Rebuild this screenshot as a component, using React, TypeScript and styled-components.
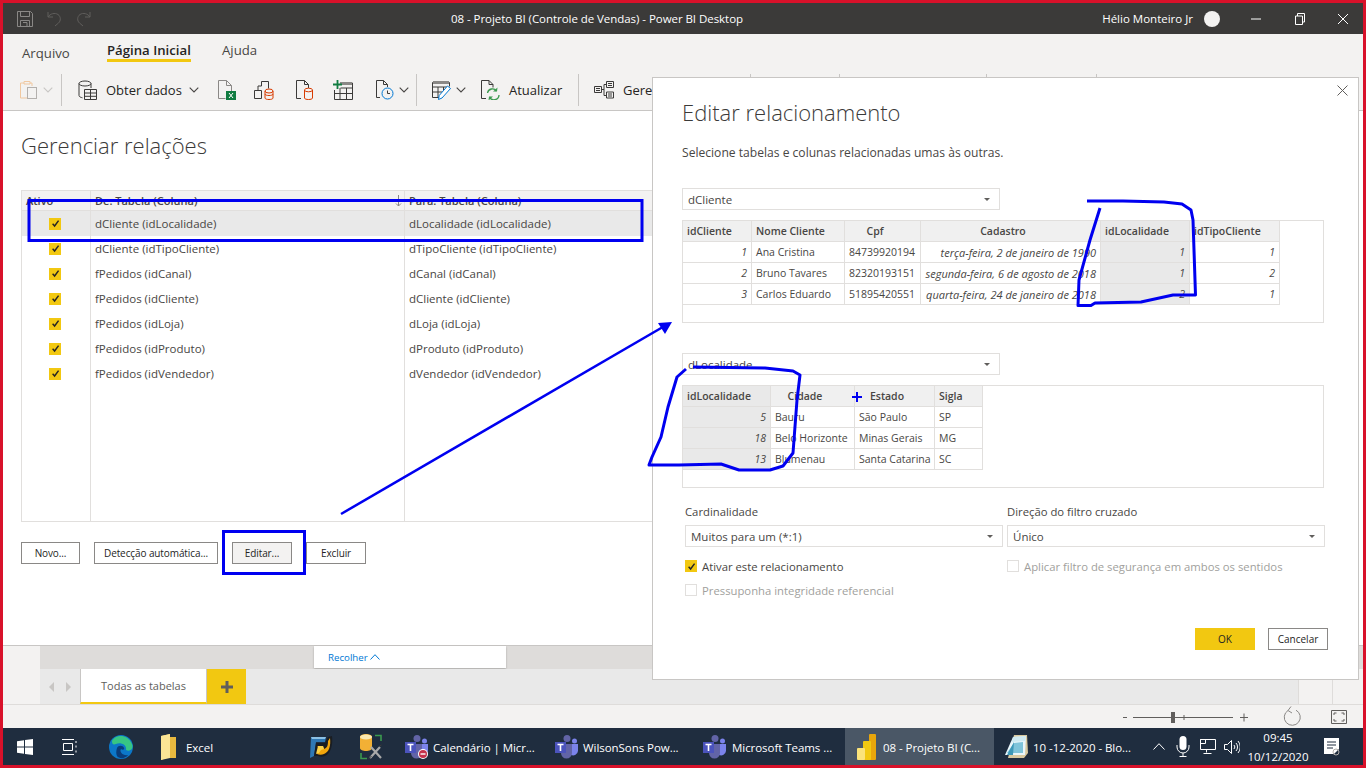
import React from 'react';
import styled, { createGlobalStyle } from 'styled-components';

const FONT = `"Open Sans", "Noto Sans", "Liberation Sans", sans-serif`;
const RED = '#d8112a';
const YELLOW = '#f2c811';
const LINE = '#e1dfdd';

const GlobalStyle = createGlobalStyle`
  html, body { margin: 0; padding: 0; background: #fff; overflow: hidden; }
  * { box-sizing: border-box; }
  body { font-family: ${FONT}; color: #252423; }
`;

const Frame = styled.div`
  position: relative;
  width: 1366px;
  height: 768px;
  border: 3px solid ${RED};
  display: flex;
  flex-direction: column;
  overflow: hidden;
  background: #fff;
`;

/* title bar */
const TitleBar = styled.header`
  height: 31px;
  flex: none;
  background: #3b3a39;
  color: #fff;
  display: grid;
  grid-template-columns: 448px 1fr auto;
  align-items: center;
  font-size: 11.5px;
`;
const QuickAccess = styled.div`
  display: flex;
  align-items: center;
  padding-left: 14px;
  gap: 14px;
`;
const WindowTitle = styled.div`
  white-space: nowrap;
  letter-spacing: -0.05px;
`;
const UserArea = styled.div`
  display: flex;
  align-items: center;
  height: 100%;
`;
const UserName = styled.span`
  margin-right: 11px;
  white-space: nowrap;
`;
const Avatar = styled.span`
  width: 16px;
  height: 16px;
  border-radius: 50%;
  background: #f3f2f1;
  margin-right: 13px;
`;
const WindowButton = styled.span<{ $w: number }>`
  width: ${p => p.$w}px;
  height: 100%;
  display: flex;
  align-items: center;
  justify-content: center;
`;

/* tabs */
const TabBar = styled.nav`
  height: 37px;
  flex: none;
  background: #f3f2f1;
  display: flex;
  padding-left: 19px;
  font-size: 13.2px;
`;
const RibbonTab = styled.span<{ $active?: boolean; $w: number; $drop?: number }>`
  width: ${p => p.$w}px;
  height: 31px;
  display: flex;
  align-items: center;
  white-space: nowrap;
  position: relative;
  font-weight: ${p => (p.$active ? 600 : 400)};
  color: ${p => (p.$active ? '#252423' : '#484644')};
  padding-top: ${p => p.$drop ?? 1}px;
  ${p => p.$active && `
    &:after {
      content: '';
      position: absolute;
      left: 0;
      bottom: 3px;
      width: 84px;
      height: 3px;
      background: ${YELLOW};
    }
  `}
`;

/* ribbon */
const Ribbon = styled.div`
  height: 40px;
  flex: none;
  background: #f3f2f1;
  border-bottom: 1px solid #c8c6c4;
  display: flex;
  align-items: flex-start;
  font-size: 13px;
`;
const RibbonSep = styled.span`
  width: 1px;
  height: 32px;
  margin-top: 3px;
  background: #c8c6c4;
  flex: none;
`;
const RibbonSlot = styled.div<{ $w: number; $pad?: number; $center?: boolean }>`
  width: ${p => p.$w}px;
  height: 38px;
  flex: none;
  display: flex;
  align-items: center;
  gap: 5px;
  padding-left: ${p => p.$pad ?? 0}px;
  justify-content: ${p => (p.$center ? 'center' : 'flex-start')};
  white-space: nowrap;
  overflow: hidden;
`;
const RibbonLabel = styled.span<{ $gap: number }>`
  margin-left: ${p => p.$gap}px;
  margin-right: 2px;
  color: #252423;
`;

/* main page */
const Page = styled.main`
  flex: 1;
  min-height: 0;
  background: #fff;
  padding: 18px 0 0 18px;
  border-bottom: 1px solid #c8c6c4;
`;
const PageTitle = styled.h1`
  margin: 0;
  height: 32px;
  line-height: 32px;
  font-size: 22px;
  font-weight: 300;
  color: #3b3a39;
`;
const RelTable = styled.div`
  margin-top: 29px;
  width: 1320px;
  height: 332px;
  border-top: 1px solid ${LINE};
  border-bottom: 1px solid ${LINE};
  border-left: 1px solid ${LINE};
  position: relative;
  font-size: 11.5px;
  color: #484644;
  display: grid;
  grid-template-columns: 69px 314px 1fr;
  grid-template-rows: 20px repeat(7, 25px) 1fr;
`;
const HeadCell = styled.div`
  background: #f3f2f1;
  font-weight: 600;
  color: #484644;
  font-size: 11px;
  padding-left: 4px;
  display: flex;
  align-items: center;
  border-bottom: 1px solid ${LINE};
  border-right: 1px solid ${LINE};
  white-space: nowrap;
  position: relative;
`;
const SortArrow = styled.span`
  position: absolute;
  right: 2px;
  top: 4px;
  display: flex;
`;
const RowCell = styled.div<{ $sel?: boolean; $check?: boolean }>`
  background: ${p => (p.$sel ? '#e9e9e9' : '#fff')};
  border-right: 1px solid ${LINE};
  display: flex;
  align-items: center;
  justify-content: ${p => (p.$check ? 'center' : 'flex-start')};
  padding: ${p => (p.$check ? '0 2px 0 0' : '0 0 0 4px')};
  white-space: nowrap;
`;
const FillCell = styled.div`
  border-right: 1px solid ${LINE};
`;
const CheckBox = styled.span<{ $on?: boolean }>`
  width: 12px;
  height: 12px;
  flex: none;
  display: inline-flex;
  align-items: center;
  justify-content: center;
  background: ${p => (p.$on ? YELLOW : '#fff')};
  border: ${p => (p.$on ? 'none' : `1px solid ${LINE}`)};
`;
const PageActions = styled.div`
  display: flex;
  margin-top: 20px;
  gap: 14px;
`;
const ActionButton = styled.button<{ $w: number; $hover?: boolean }>`
  width: ${p => p.$w}px;
  height: 22px;
  font: 400 10px ${FONT};
  letter-spacing: -0.1px;
  color: #252423;
  background: ${p => (p.$hover ? '#f3f2f1' : '#fff')};
  border: 1px solid #8a8886;
  padding: 0;
  white-space: nowrap;
`;

/* bottom strips */
const Collapser = styled.div`
  height: 23px;
  flex: none;
  display: flex;
  background: #f3f2f1;
`;
const CollapserTrack = styled.div`
  margin-left: 37px;
  flex: 1;
  background: #dedcda;
  padding-left: 274px;
`;
const CollapsePanel = styled.div`
  width: 192px;
  height: 22px;
  background: #fff;
  box-shadow: 0 1px 2px rgba(0, 0, 0, 0.25);
  color: #0078d4;
  font-size: 9.7px;
  display: flex;
  align-items: center;
  gap: 2px;
  padding-left: 14px;
`;
const SheetBar = styled.div`
  height: 36px;
  flex: none;
  display: flex;
  background: #f3f2f1;
  border-bottom: 1px solid #dedcda;
`;
const SheetTrack = styled.div`
  margin-left: 37px;
  flex: 1;
  display: flex;
  background: #e9e9e9;
`;
const SheetNav = styled.div`
  width: 40px;
  display: flex;
  align-items: center;
  justify-content: space-around;
  padding: 0 3px;
`;
const SheetTab = styled.div`
  width: 127px;
  height: 35px;
  background: #fff;
  border-bottom: 2px solid ${YELLOW};
  border-left: 1px solid #c8c6c4;
  border-right: 1px solid #c8c6c4;
  font-size: 11px;
  color: #605e5c;
  display: flex;
  align-items: center;
  justify-content: center;
`;
const AddSheet = styled.div`
  width: 39px;
  height: 35px;
  background: ${YELLOW};
  display: flex;
  align-items: center;
  justify-content: center;
`;
const SheetEnd = styled.div`
  margin-left: auto;
  width: 65px;
  height: 100%;
  background: #f3f2f1;
  display: flex;
`;
const SheetEndCell = styled.div`
  width: 35px;
  border-left: 1px solid #dedcda;
  border-right: 1px solid #dedcda;
`;
const StatusBar = styled.div`
  height: 23px;
  flex: none;
  background: #f3f2f1;
  display: flex;
  align-items: center;
  justify-content: flex-end;
  padding-right: 16px;
`;
const StatusGap = styled.span<{ $w: number }>`
  width: ${p => p.$w}px;
  flex: none;
`;

/* taskbar */
const Taskbar = styled.footer`
  height: 37px;
  flex: none;
  background: #1f2d3f;
  color: #fff;
  display: flex;
  font-size: 11.5px;
`;
const TaskItem = styled.div<{ $w: number; $pad?: number; $active?: boolean }>`
  width: ${p => p.$w}px;
  height: 100%;
  flex: none;
  display: flex;
  align-items: center;
  justify-content: ${p => (p.$pad === undefined ? 'center' : 'flex-start')};
  padding-left: ${p => p.$pad ?? 0}px;
  background: ${p => (p.$active ? '#4a5766' : 'transparent')};
  white-space: nowrap;
`;
const TaskLabel = styled.span<{ $gap: number }>`
  margin-left: ${p => p.$gap}px;
  padding-top: 2px;
  letter-spacing: -0.05px;
`;
const Clock = styled.div`
  width: 76px;
  height: 100%;
  flex: none;
  display: flex;
  flex-direction: column;
  align-items: center;
  justify-content: center;
  font-size: 11.5px;
  line-height: 19px;
`;

/* dialog */
const Dialog = styled.section`
  position: absolute;
  left: 649px;
  top: 74px;
  width: 707px;
  height: 603px;
  background: #fff;
  border: 1px solid #c8c6c4;
  padding: 18px 30px 0 29px;
  color: #252423;
`;
const DialogClose = styled.span`
  position: absolute;
  right: 10px;
  top: 7px;
  display: flex;
`;
const DialogTitle = styled.h2`
  margin: 0;
  height: 32px;
  line-height: 32px;
  font-size: 22px;
  font-weight: 300;
  color: #3b3a39;
`;
const DialogHint = styled.p`
  margin: 16px 0 0;
  height: 18px;
  line-height: 18px;
  font-size: 12.1px;
  color: #484644;
`;
const Select = styled.div<{ $w: number; $mt: number }>`
  width: ${p => p.$w}px;
  height: 22px;
  margin-top: ${p => p.$mt}px;
  border: 1px solid ${LINE};
  background: #fff;
  display: flex;
  align-items: center;
  justify-content: space-between;
  padding: 0 9px 0 5px;
  font-size: 11.5px;
  color: #484644;
`;
const Caret = styled.span`
  width: 0;
  height: 0;
  border-left: 3px solid transparent;
  border-right: 3px solid transparent;
  border-top: 3px solid #605e5c;
`;
const PreviewBox = styled.div`
  width: 642px;
  height: 103px;
  margin-top: 10px;
  border: 1px solid ${LINE};
`;
const Preview = styled.table<{ $w: number }>`
  width: ${p => p.$w}px;
  table-layout: fixed;
  border-collapse: collapse;
  font-size: 10.5px;
  color: #484644;
  margin: -1px 0 0 -1px;
`;
const PreviewHead = styled.th<{ $center?: boolean; $key?: boolean }>`
  height: 21px;
  padding: ${p => (p.$center ? '0 19px 0 4px' : '0 4px')};
  font-weight: 600;
  font-size: 10.5px;
  background: ${p => (p.$key ? '#e9e9e9' : '#f0f0f0')};
  border: 1px solid ${LINE};
  text-align: ${p => (p.$center ? 'center' : 'left')};
  white-space: nowrap;
  overflow: hidden;
`;
const PreviewCell = styled.td<{ $num?: boolean; $key?: boolean; $date?: boolean }>`
  height: 21px;
  padding: 0 4px;
  border: 1px solid ${LINE};
  background: ${p => (p.$key ? '#e9e9e9' : '#fff')};
  font-style: ${p => (p.$num || p.$date ? 'italic' : 'normal')};
  font-size: ${p => (p.$date ? 11 : 10.5)}px;
  text-align: ${p => (p.$num || p.$date ? 'right' : 'left')};
  white-space: nowrap;
  overflow: hidden;
`;
const FormGrid = styled.div`
  display: grid;
  grid-template-columns: 318px 318px;
  column-gap: 4px;
  margin: 16px 0 0 3px;
`;
const FieldLabel = styled.label`
  display: block;
  height: 16px;
  line-height: 16px;
  font-size: 11.3px;
  color: #484644;
`;
const CheckRow = styled.div<{ $mt: number; $off?: boolean }>`
  display: flex;
  align-items: center;
  gap: 5px;
  height: 14px;
  margin-top: ${p => p.$mt}px;
  font-size: 11.3px;
  white-space: nowrap;
  color: ${p => (p.$off ? '#a19f9d' : '#484644')};
`;
const DialogFooter = styled.div`
  display: flex;
  justify-content: flex-end;
  gap: 13px;
  margin-top: 31px;
`;
const DialogButton = styled.button<{ $primary?: boolean }>`
  height: 22px;
  width: 60px;
  padding: 0;
  font: 400 10px ${FONT};
  color: #252423;
  background: ${p => (p.$primary ? YELLOW : '#fff')};
  border: ${p => (p.$primary ? 'none' : '1px solid #8a8886')};
`;

/* hand drawn marks that lie over the screen */
const Markup = styled.svg`
  position: absolute;
  left: -3px;
  top: -3px;
  width: 1366px;
  height: 768px;
  pointer-events: none;
`;

/* icons */
const Svg = styled.svg`
  display: block;
  flex: none;
`;
const Chevron = ({ color = '#484644', w = 10 }: { color?: string; w?: number }) => (
  <Svg width={w} height="6" viewBox="0 0 10 6" fill="none" stroke={color} strokeWidth="1.1">
    <path d="M.7.7 5 5 9.3.7" />
  </Svg>
);
const Tick = () => (
  <Svg width="9" height="9" viewBox="0 0 10 10" fill="none" stroke="#252423" strokeWidth="1.6">
    <path d="M1.8 5.4 4 7.8 8.4 1.8" />
  </Svg>
);
const IconSave = () => (
  <Svg width="16" height="16" viewBox="0 0 16 16" fill="none" stroke="#8a8886">
    <path d="M.5.5h13l2 2v13H.5zM3.500.5v5h9v-5M3.500 15.500v-6h9v6M6 11.500h4v4" />
  </Svg>
);
const IconUndo = ({ flip }: { flip?: boolean }) => (
  <Svg width="15" height="16" viewBox="0 0 15 16" fill="none" stroke="#605e5c" style={flip ? { transform: 'scaleX(-1)' } : undefined}>
    <path d="M1 1v5h5M1.200 6C3 2.500 8 1.500 11 3.500c3 2 3 6.500.5 8.500L8 15" />
  </Svg>
);
const IconClipboard = () => (
  <Svg width="18" height="20" viewBox="0 0 18 20" fill="none">
    <path d="M4 3H.5v15H7M10 3h2v3M4 1.500h6V4H4z" stroke="#f0c8a0" />
    <rect x="7.500" y="7.500" width="9" height="11" stroke="#b3b0ad" />
  </Svg>
);
const IconGetData = () => (
  <Svg width="19" height="20" viewBox="0 0 19 20" fill="none" stroke="#3b3a39">
    <path d="M1 3.500v12c0 1.300 2 2 3.500 2.300M13 3.500V8" />
    <ellipse cx="7" cy="3.500" rx="6" ry="2.500" />
    <path d="M6.500 9.500h12v10h-12zM6.500 13h12M6.500 16.300h12M12.500 9.500v10" />
  </Svg>
);
const IconExcel = () => (
  <Svg width="18" height="20" viewBox="0 0 18 20" fill="none">
    <path d="M.5.500h8l5 5V13M.5.500v18h7" stroke="#8a8886" />
    <path d="M8.500.500v5h5" stroke="#8a8886" />
    <rect x="8" y="11" width="10" height="9" fill="#107c41" />
    <path d="m11 13 4 5m0-5-4 5" stroke="#fff" />
  </Svg>
);
const IconHub = () => (
  <Svg width="20" height="20" viewBox="0 0 20 20" fill="none">
    <path d="M7.500 6V1.500h7v7M.5 10.500h7v8h-7zM7.500 6H4v4.500" stroke="#3b3a39" />
    <ellipse cx="15" cy="11" rx="4" ry="2" stroke="#d83b01" />
    <path d="M11 11v7c0 1 2 1.500 4 1.500s4-.5 4-1.500v-7M11 14c0 1 2 1.500 4 1.500s4-.5 4-1.500" stroke="#d83b01" />
  </Svg>
);
const IconDbFile = () => (
  <Svg width="18" height="20" viewBox="0 0 18 20" fill="none">
    <path d="M5 18.500H.5V.5h8l4 4V8M8.500.5v4h4" stroke="#3b3a39" />
    <ellipse cx="12.500" cy="10" rx="4" ry="1.800" stroke="#d83b01" />
    <path d="M8.500 10v8c0 1 2 1.500 4 1.500s4-.5 4-1.500v-8" stroke="#d83b01" />
  </Svg>
);
const IconNewTable = () => (
  <Svg width="20" height="20" viewBox="0 0 20 20" fill="none">
    <path d="M7 3h12.500v16.500H1.500V10" stroke="#3b3a39" />
    <path d="M7.500 8h12M1.500 13.500h18M7 8v11.500M13.500 8v11.500" stroke="#3b3a39" />
    <path d="M7 2h12v3H7z" fill="#8a8886" />
    <path d="M4.500 0v9M0 4.500h9" stroke="#107c41" strokeWidth="1.800" />
  </Svg>
);
const IconSchedule = () => (
  <Svg width="18" height="20" viewBox="0 0 18 20" fill="none">
    <path d="M4 17.500H.5V.5h7l4 4V7M7.500.5v4h4" stroke="#3b3a39" />
    <circle cx="11.500" cy="13.500" r="5.500" stroke="#0078d4" />
    <path d="M11.500 10.500v3h2.500" stroke="#3b3a39" />
  </Svg>
);
const IconEditTable = () => (
  <Svg width="19" height="20" viewBox="0 0 19 20" fill="none">
    <path d="M.5 2.500h17v4M.5 2.500v15h9M.5 7h15M.5 12h11M6 7v10.500M11.500 7v5" stroke="#3b3a39" />
    <path d="M1 1h16v3H1z" fill="#8a8886" />
    <path d="m6.500 19.500.7-4L15.500 6l3 2.500-8.500 9.500z" fill="#fff" stroke="#0078d4" />
  </Svg>
);
const IconRefresh = () => (
  <Svg width="19" height="20" viewBox="0 0 19 20" fill="none">
    <path d="M5 18.500H.5V.5h7.500l4 4v3M8 .5v4h4" stroke="#3b3a39" />
    <path d="M6.500 13a5 5 0 0 1 9-2M18 15a5 5 0 0 1-9.500 2" stroke="#3b9a4f" strokeWidth="1.300" />
    <path d="m16.500 7.500-.5 4h-4zM7.500 20.500l.5-4h4z" fill="#3b9a4f" />
  </Svg>
);
const IconManage = () => (
  <Svg width="20" height="18" viewBox="0 0 20 18" fill="none" stroke="#3b3a39">
    <path d="M.5 5.500h7v6h-7zM12.500.5h7v6h-7zM12.500 11h7v6h-7zM7.500 8.500h2.500M10 3.500v11M10 3.500h2.500M10 14.500h2.500M2 7.500h4M2 9.500h4M14 2.500h4M14 4.500h4M14 13h4M14 15h4" />
  </Svg>
);
const IconWindows = () => (
  <Svg width="16" height="16" viewBox="0 0 16 16" fill="#fff">
    <path d="M0 2.200 7 1.200v6.300H0zM8 1l8-1v7.500H8zM0 8.500h7v6.300l-7-1zM8 8.500h8V16l-8-1z" />
  </Svg>
);
const IconTaskView = () => (
  <Svg width="16" height="16" viewBox="0 0 16 16" fill="none" stroke="#fff">
    <path d="M0 .5h12M0 15.500h12M1.500 4.500h9v7h-9zM14 2v2M14 6.500v2M14 11.500v2" />
  </Svg>
);
const IconEdge = () => (
  <Svg width="24" height="24" viewBox="0 0 24 24">
    <circle cx="12" cy="12" r="12" fill="#0c77c9" />
    <path d="M3 6c3-6 15-8 20 3 2 5-2 8-6 6 1-5-5-8-10-6-3 1-4 0-4-3z" fill="#37c584" />
    <path d="M8 13c1-3 6-3 7 0 1 2-2 2-3 1-2 3 2 7 7 6-3 4-9 4-11 1-1-2-1-5 0-8z" fill="#0a3c7a" />
  </Svg>
);
const IconFolder = () => (
  <Svg width="16" height="26" viewBox="0 0 16 26">
    <path d="M1 2 10 0v3h6v21H6l-5 2z" fill="#f7d774" />
    <path d="M10 3h6v21h-6z" fill="#e8b93f" />
    <path d="M1 2l9-2v24l-9 2z" fill="#fbe595" />
  </Svg>
);
const IconPbiOld = () => (
  <Svg width="25" height="24" viewBox="0 0 25 24">
    <path d="M2 2h15l-1 5H7L5 21l-4 2z" fill="#2f78b4" />
    <path d="M2 2h15l-1 2H3z" fill="#8cc0e4" />
    <path d="M5 21 7 8h9l3-6 4-1c1 9-1 17-7 20-2 1-5 1-7 0z" fill="#1a1d22" />
    <path d="M8 11h6l1 3c3-1 4-3 4-8l2-3c1 8-1 14-6 16-2 1-5 1-7 0l1-3 2-3z" fill="#f2a60c" />
    <path d="M9 11h5l1 3-3 1-2 3-3 1z" fill="#fbd24a" />
  </Svg>
);
const IconTools = () => (
  <Svg width="24" height="26" viewBox="0 0 24 26" fill="none">
    <path d="M1 3c0-4 12-4 12 0v11c0 4-12 4-12 0z" fill="#f2b035" />
    <ellipse cx="7" cy="3" rx="6" ry="2.500" fill="#fbe8b0" />
    <path d="M16 1.500h6V7M2 19v5.500h6" stroke="#3b9a4f" strokeWidth="1.600" />
    <path d="m11 24 10-11m-9 0 10 11" stroke="#a8a8a8" strokeWidth="2.200" />
    <path d="m9.500 25 3-3m8-10 2-1" stroke="#3b3a39" strokeWidth="1" />
  </Svg>
);
const IconTeams = ({ busy }: { busy?: boolean }) => (
  <Svg width="24" height="26" viewBox="0 0 24 26">
    <circle cx="12" cy="4.500" r="3.500" fill="#6264a7" />
    <circle cx="19.500" cy="7" r="2.500" fill="#7b83eb" />
    <path d="M15 10h8v7a5 5 0 0 1-7 4z" fill="#7b83eb" />
    <path d="M6 10h11v9a5.500 5.500 0 0 1-11 0z" fill="#6264a7" />
    <rect x="0" y="8" width="11" height="11" fill="#4b53bc" />
    <path d="M2.500 10.500h6M5.500 10.500v6.500" stroke="#fff" strokeWidth="1.600" />
    {busy && <circle cx="18" cy="20" r="5" fill="#fff" />}
    {busy && <circle cx="18" cy="20" r="4" fill="#c4314b" />}
    {busy && <path d="M15.500 20h5" stroke="#fff" strokeWidth="1.400" />}
  </Svg>
);
const IconPowerBi = () => (
  <Svg width="19" height="26" viewBox="0 0 19 26">
    <rect x="12" y="0" width="7" height="26" rx="1" fill="#e8a60c" />
    <rect x="6" y="7" width="8" height="19" rx="1" fill="#f2c811" />
    <rect x="0" y="14" width="8" height="12" rx="1" fill="#fbe37a" />
  </Svg>
);
const IconNotepad = () => (
  <Svg width="23" height="24" viewBox="0 0 23 24">
    <path d="M9 0h13l1 18-4 5H3z" fill="#d9c9a0" />
    <path d="M8 2 21 1l-1 19L0 20z" fill="#eaf6fa" />
    <path d="M9 8 18 7v11H2z" fill="#7fc4da" />
    <path d="M8 2 21 1l-1 5L7 7z" fill="#cfeaf2" />
    <path d="m2 20 7-13-1 13z" fill="#3d98b8" />
  </Svg>
);
const IconMic = () => (
  <Svg width="14" height="21" viewBox="0 0 14 21" fill="none">
    <rect x="3.500" y="0" width="7" height="14" rx="3.500" fill="#fff" />
    <path d="M1 9v2a6 6 0 0 0 12 0V9M7 17v3M3.500 20.500h7" stroke="#fff" />
  </Svg>
);
const IconNetwork = () => (
  <Svg width="16" height="16" viewBox="0 0 16 16" fill="none" stroke="#fff">
    <path d="M.5.5h15v10H.5zM6.500 10.500v3M3.500 14.500h8M.5.5h5v4h-5z" />
  </Svg>
);
const IconSpeaker = () => (
  <Svg width="16" height="16" viewBox="0 0 16 16" fill="none" stroke="#fff">
    <path d="M.5 5.500h3l4-4v13l-4-4h-3zM10 6a3 3 0 0 1 0 4M12 4a6 6 0 0 1 0 8M14 2a9 9 0 0 1 0 12" />
  </Svg>
);
const IconNotes = () => (
  <Svg width="16" height="18" viewBox="0 0 16 18">
    <path d="M0 0h15v11l-5 5H0z" fill="#fff" />
    <path d="M3 4h9M3 7h9M3 10h6" stroke="#1f2d3f" />
    <circle cx="12" cy="14" r="3" fill="none" stroke="#b3b0ad" />
  </Svg>
);
const ZoomSlider = () => (
  <Svg width="125" height="14" viewBox="0 0 125 14" fill="none" stroke="#605e5c">
    <path d="M0 7.500h4M10 7.500h100M61 5v5M121 3.500v8M117 7.500h8" />
    <rect x="48" y="2" width="4" height="11" fill="#605e5c" stroke="none" />
  </Svg>
);
const IconRecycle = () => (
  <Svg width="18" height="22" viewBox="0 0 18 22" fill="none" stroke="#8a8886">
    <path d="M5 4.500a8 8 0 1 0 8-.3M8 .5 5 4.500 9 7" />
  </Svg>
);
const IconFit = () => (
  <Svg width="16" height="14" viewBox="0 0 16 14" fill="none" stroke="#605e5c">
    <path d="M.5.5h15v13H.5zM3 5V3h2.500M13 5V3h-2.500M3 9v2h2.500M13 9v2h-2.500" />
  </Svg>
);

const relations = [
  ['dCliente (idLocalidade)', 'dLocalidade (idLocalidade)'],
  ['dCliente (idTipoCliente)', 'dTipoCliente (idTipoCliente)'],
  ['fPedidos (idCanal)', 'dCanal (idCanal)'],
  ['fPedidos (idCliente)', 'dCliente (idCliente)'],
  ['fPedidos (idLoja)', 'dLoja (idLoja)'],
  ['fPedidos (idProduto)', 'dProduto (idProduto)'],
  ['fPedidos (idVendedor)', 'dVendedor (idVendedor)'],
];

const clientes = [
  ['1', 'Ana Cristina', '84739920194', 'terça-feira, 2 de janeiro de 1990', '1', '1'],
  ['2', 'Bruno Tavares', '82320193151', 'segunda-feira, 6 de agosto de 2018', '1', '2'],
  ['3', 'Carlos Eduardo', '51895420551', 'quarta-feira, 24 de janeiro de 2018', '2', '1'],
];

const localidades = [
  ['5', 'Bauru', 'São Paulo', 'SP'],
  ['18', 'Belo Horizonte', 'Minas Gerais', 'MG'],
  ['13', 'Blumenau', 'Santa Catarina', 'SC'],
];

const App: React.FC = () => {
  return (
    <Frame>
      <GlobalStyle />
      <TitleBar>
        <QuickAccess>
          <IconSave />
          <IconUndo />
          <IconUndo flip />
        </QuickAccess>
        <WindowTitle>08 - Projeto BI (Controle de Vendas) - Power BI Desktop</WindowTitle>
        <UserArea>
          <UserName>Hélio Monteiro Jr</UserName>
          <Avatar />
          <WindowButton $w={45}>
            <Svg width="10" height="2" viewBox="0 0 10 2"><path d="M0 1h10" stroke="#fff" /></Svg>
          </WindowButton>
          <WindowButton $w={44}>
            <Svg width="10" height="12" viewBox="0 0 10 12" fill="none" stroke="#fff"><path d="M.5 3h7v8.500h-7zM2.500 3V.5h7v8.500h-2" /></Svg>
          </WindowButton>
          <WindowButton $w={41}>
            <Svg width="12" height="12" viewBox="0 0 12 12" fill="none" stroke="#fff"><path d="M1 1l10 10M11 1 1 11" /></Svg>
          </WindowButton>
        </UserArea>
      </TitleBar>

      <TabBar>
        <RibbonTab $w={85} $drop={6}>Arquivo</RibbonTab>
        <RibbonTab $w={115} $active>Página Inicial</RibbonTab>
        <RibbonTab $w={60}>Ajuda</RibbonTab>
      </TabBar>

      <Ribbon>
        <RibbonSlot $w={58} $pad={17}>
          <IconClipboard />
          <Chevron color="#c8c6c4" />
        </RibbonSlot>
        <RibbonSep />
        <RibbonSlot $w={146} $pad={16}>
          <IconGetData />
          <RibbonLabel $gap={4}>Obter dados</RibbonLabel>
          <Chevron />
        </RibbonSlot>
        <RibbonSlot $w={37} $center><IconExcel /></RibbonSlot>
        <RibbonSlot $w={38} $center><IconHub /></RibbonSlot>
        <RibbonSlot $w={43} $center><IconDbFile /></RibbonSlot>
        <RibbonSlot $w={34} $center><IconNewTable /></RibbonSlot>
        <RibbonSlot $w={56} $pad={16}>
          <IconSchedule />
          <Chevron />
        </RibbonSlot>
        <RibbonSep />
        <RibbonSlot $w={56} $pad={15}>
          <IconEditTable />
          <Chevron />
        </RibbonSlot>
        <RibbonSlot $w={105} $pad={8}>
          <IconRefresh />
          <RibbonLabel $gap={4}>Atualizar</RibbonLabel>
        </RibbonSlot>
        <RibbonSep />
        <RibbonSlot $w={171} $pad={15}>
          <IconManage />
          <RibbonLabel $gap={4}>Gerenciar relações</RibbonLabel>
        </RibbonSlot>
        <RibbonSep />
        <RibbonSlot $w={88} />
        <RibbonSep />
        <RibbonSlot $w={146} />
        <RibbonSep />
        <RibbonSlot $w={109} />
        <RibbonSep />
      </Ribbon>

      <Page>
        <PageTitle>Gerenciar relações</PageTitle>
        <RelTable>
          <HeadCell>Ativo</HeadCell>
          <HeadCell>
            De: Tabela (Coluna)
            <SortArrow>
              <Svg width="7" height="12" viewBox="0 0 7 12" fill="none" stroke="#8a8886"><path d="M3.500 0v11M1 8.500l2.500 2.500L6 8.500" /></Svg>
            </SortArrow>
          </HeadCell>
          <HeadCell>Para: Tabela (Coluna)</HeadCell>
          {relations.map(([from, to], i) => (
            <React.Fragment key={from}>
              <RowCell $check $sel={i === 0}>
                <CheckBox $on><Tick /></CheckBox>
              </RowCell>
              <RowCell $sel={i === 0}>{from}</RowCell>
              <RowCell $sel={i === 0}>{to}</RowCell>
            </React.Fragment>
          ))}
          <FillCell />
          <FillCell />
          <FillCell />
        </RelTable>
        <PageActions>
          <ActionButton $w={59}>Novo...</ActionButton>
          <ActionButton $w={124}>Detecção automática...</ActionButton>
          <ActionButton $w={60} $hover>Editar...</ActionButton>
          <ActionButton $w={60}>Excluir</ActionButton>
        </PageActions>
      </Page>

      <Collapser>
        <CollapserTrack>
          <CollapsePanel>
            Recolher
            <Svg width="10" height="6" viewBox="0 0 10 6" fill="none" stroke="#0078d4"><path d="M.5 5.500 5 .7l4.500 4.800" /></Svg>
          </CollapsePanel>
        </CollapserTrack>
      </Collapser>
      <SheetBar>
        <SheetTrack>
          <SheetNav>
            <Svg width="5" height="10" viewBox="0 0 5 10" fill="#c8c6c4"><path d="M5 0v10L0 5z" /></Svg>
            <Svg width="5" height="10" viewBox="0 0 5 10" fill="#c8c6c4"><path d="M0 0v10l5-5z" /></Svg>
          </SheetNav>
          <SheetTab>Todas as tabelas</SheetTab>
          <AddSheet>
            <Svg width="12" height="12" viewBox="0 0 12 12" stroke="#605e5c" strokeWidth="3"><path d="M6 0v12M0 6h12" /></Svg>
          </AddSheet>
          <SheetEnd>
            <SheetEndCell />
          </SheetEnd>
        </SheetTrack>
      </SheetBar>
      <StatusBar>
        <ZoomSlider />
        <StatusGap $w={35} />
        <IconRecycle />
        <StatusGap $w={30} />
        <IconFit />
      </StatusBar>

      <Taskbar>
        <TaskItem $w={43}><IconWindows /></TaskItem>
        <TaskItem $w={48}><IconTaskView /></TaskItem>
        <TaskItem $w={53}><IconEdge /></TaskItem>
        <TaskItem $w={150} $pad={13}>
          <IconFolder />
          <TaskLabel $gap={10}>Excel</TaskLabel>
        </TaskItem>
        <TaskItem $w={49}><IconPbiOld /></TaskItem>
        <TaskItem $w={49}><IconTools /></TaskItem>
        <TaskItem $w={150} $pad={10}>
          <IconTeams busy />
          <TaskLabel $gap={4}>Calendário | Micr...</TaskLabel>
        </TaskItem>
        <TaskItem $w={150} $pad={10}>
          <IconTeams />
          <TaskLabel $gap={4}>WilsonSons Pow...</TaskLabel>
        </TaskItem>
        <TaskItem $w={150} $pad={8}>
          <IconTeams />
          <TaskLabel $gap={5}>Microsoft Teams ...</TaskLabel>
        </TaskItem>
        <TaskItem $w={149} $pad={12} $active>
          <IconPowerBi />
          <TaskLabel $gap={7}>08 - Projeto BI (C...</TaskLabel>
        </TaskItem>
        <TaskItem $w={150} $pad={11}>
          <IconNotepad />
          <TaskLabel $gap={5}>10 -12-2020 - Blo...</TaskLabel>
        </TaskItem>
        <TaskItem $w={30}>
          <Svg width="12" height="7" viewBox="0 0 12 7" fill="none" stroke="#fff"><path d="M.5 6.500 6 .7l5.500 5.800" /></Svg>
        </TaskItem>
        <TaskItem $w={17}><IconMic /></TaskItem>
        <TaskItem $w={33}><IconNetwork /></TaskItem>
        <TaskItem $w={16}><IconSpeaker /></TaskItem>
        <Clock>
          <span>09:45</span>
          <span>10/12/2020</span>
        </Clock>
        <TaskItem $w={32}><IconNotes /></TaskItem>
      </Taskbar>

      <Dialog>
        <DialogClose>
          <Svg width="11" height="11" viewBox="0 0 11 11" fill="none" stroke="#605e5c"><path d="M.5.5l10 10M10.500.5l-10 10" /></Svg>
        </DialogClose>
        <DialogTitle>Editar relacionamento</DialogTitle>
        <DialogHint>Selecione tabelas e colunas relacionadas umas às outras.</DialogHint>
        <Select $w={318} $mt={26}>dCliente<Caret /></Select>
        <PreviewBox>
          <Preview $w={597}>
            <colgroup>
              <col style={{ width: 69 }} />
              <col style={{ width: 93 }} />
              <col style={{ width: 76 }} />
              <col style={{ width: 180 }} />
              <col style={{ width: 89 }} />
              <col style={{ width: 90 }} />
            </colgroup>
            <thead>
              <tr>
                <PreviewHead>idCliente</PreviewHead>
                <PreviewHead>Nome Cliente</PreviewHead>
                <PreviewHead $center>Cpf</PreviewHead>
                <PreviewHead $center>Cadastro</PreviewHead>
                <PreviewHead $key>idLocalidade</PreviewHead>
                <PreviewHead>idTipoCliente</PreviewHead>
              </tr>
            </thead>
            <tbody>
              {clientes.map(c => (
                <tr key={c[0]}>
                  <PreviewCell $num>{c[0]}</PreviewCell>
                  <PreviewCell>{c[1]}</PreviewCell>
                  <PreviewCell>{c[2]}</PreviewCell>
                  <PreviewCell $date>{c[3]}</PreviewCell>
                  <PreviewCell $num $key>{c[4]}</PreviewCell>
                  <PreviewCell $num>{c[5]}</PreviewCell>
                </tr>
              ))}
            </tbody>
          </Preview>
        </PreviewBox>

        <Select $w={318} $mt={30}>dLocalidade<Caret /></Select>
        <PreviewBox>
          <Preview $w={300}>
            <colgroup>
              <col style={{ width: 88 }} />
              <col style={{ width: 84 }} />
              <col style={{ width: 80 }} />
              <col style={{ width: 48 }} />
            </colgroup>
            <thead>
              <tr>
                <PreviewHead $key>idLocalidade</PreviewHead>
                <PreviewHead $center>Cidade</PreviewHead>
                <PreviewHead $center>Estado</PreviewHead>
                <PreviewHead>Sigla</PreviewHead>
              </tr>
            </thead>
            <tbody>
              {localidades.map(l => (
                <tr key={l[0]}>
                  <PreviewCell $num $key>{l[0]}</PreviewCell>
                  <PreviewCell>{l[1]}</PreviewCell>
                  <PreviewCell>{l[2]}</PreviewCell>
                  <PreviewCell>{l[3]}</PreviewCell>
                </tr>
              ))}
            </tbody>
          </Preview>
        </PreviewBox>

        <FormGrid>
          <div>
            <FieldLabel>Cardinalidade</FieldLabel>
            <Select $w={318} $mt={5}>Muitos para um (*:1)<Caret /></Select>
            <CheckRow $mt={12}>
              <CheckBox $on><Tick /></CheckBox>
              Ativar este relacionamento
            </CheckRow>
            <CheckRow $mt={10} $off>
              <CheckBox />
              Pressuponha integridade referencial
            </CheckRow>
          </div>
          <div>
            <FieldLabel>Direção do filtro cruzado</FieldLabel>
            <Select $w={318} $mt={5}>Único<Caret /></Select>
            <CheckRow $mt={12} $off>
              <CheckBox />
              Aplicar filtro de segurança em ambos os sentidos
            </CheckRow>
          </div>
        </FormGrid>
        <DialogFooter>
          <DialogButton $primary>OK</DialogButton>
          <DialogButton>Cancelar</DialogButton>
        </DialogFooter>
      </Dialog>

      <Markup viewBox="0 0 1366 768" fill="none" stroke="#0000f0" strokeWidth="3">
        <rect x="29" y="200.500" width="613" height="40" />
        <rect x="223.500" y="531.500" width="81" height="42" />
        <path d="M341 514 668 324" strokeWidth="2.500" />
        <path d="M658 323 672 322 665 334z" fill="#0000f0" stroke="none" />
        <path strokeLinejoin="round" d="M1087 201 1123 201 1164 202 1182 204 1191 210 1193 220 1195.500 295 1173 295 1141 302 1095 303 1091 305.500 1078 305.500 1079 280 1090 240 1100 208" />
        <path strokeLinejoin="round" d="M693 367 765 368 793 371 800 375 797 400 793 453 783 466 770 470 739 470 721 464 679 465 649 465 652 457 661 437 668 407 677 377 686 369" />
        <path strokeWidth="2" d="M852 397h10M857 392v10" />
      </Markup>
    </Frame>
  );
};

export default App;
